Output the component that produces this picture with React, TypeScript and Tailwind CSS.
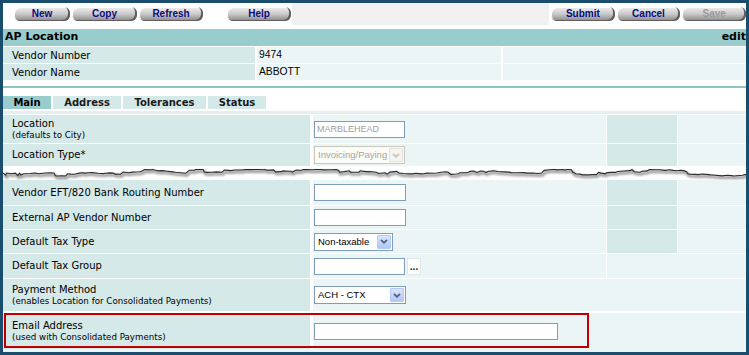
import React from "react";

const LBL = "bg-[#d5e9e9]";
const VAL = "bg-[#ecf5f5]";
const VERD = "font-['DejaVu_Sans',Verdana,sans-serif]";
const ARIAL = "font-['Liberation_Sans',Arial,sans-serif]";

function Btn({ label, w, disabled }: { label: string; w: string; disabled?: boolean }) {
  return (
    <div
      className={`${w} h-[14px] rounded-[6px] bg-gradient-to-b from-[#f0f0f0] via-[#c9c9c9] to-[#888888] shadow-[inset_-2px_-1px_0_#5e5e5e,inset_1px_1px_0_#ffffff] flex items-center justify-center ${ARIAL} font-bold text-[10px] leading-none ${
        disabled ? "text-[#9a9a9a]" : "text-[#0a0a80]"
      }`}
    >
      {label}
    </div>
  );
}

function Chevron({ color }: { color: string }) {
  return (
    <svg width="8" height="5" viewBox="0 0 8 5">
      <path d="M1 0.8 L4 3.8 L7 0.8" fill="none" stroke={color} strokeWidth="1.8" />
    </svg>
  );
}

function Select({ text, w, disabled }: { text: string; w: string; disabled?: boolean }) {
  return (
    <div
      className={`${w} h-[18px] flex items-center border ${
        disabled ? "border-[#c9c7ba] bg-[#fbfbf8]" : "border-[#7f9db9] bg-white"
      }`}
    >
      <span
        className={`flex-1 pl-[3px] ${ARIAL} text-[9.5px] leading-none whitespace-nowrap overflow-hidden ${
          disabled ? "text-[#a8a79d]" : "text-black"
        }`}
      >
        {text}
      </span>
      <div
        className={`w-[14px] h-[14px] mr-[1px] rounded-[1px] flex items-center justify-center border ${
          disabled
            ? "border-[#e2e1da] bg-[#f5f4ef]"
            : "border-[#b5c9f6] bg-gradient-to-b from-[#dbe6fd] to-[#b1c6f5]"
        }`}
      >
        <Chevron color={disabled ? "#c9c7ba" : "#4d6185"} />
      </div>
    </div>
  );
}

function Input({ w, text }: { w: string; text?: string }) {
  return (
    <div className={`${w} h-[17px] border border-[#7f9db9] bg-white flex items-center pl-[2px]`}>
      {text && <span className={`${ARIAL} text-[9px] text-[#a0a0a0] leading-none`}>{text}</span>}
    </div>
  );
}

function Label({ main, sub }: { main: string; sub?: string }) {
  return (
    <div className={`w-[307px] ${LBL} pl-[9px] flex flex-col justify-center ${VERD} text-black`}>
      <div className="text-[10px] leading-[12px]">{main}</div>
      {sub && <div className="text-[8.7px] leading-[11px]">{sub}</div>}
    </div>
  );
}

function tornPath(width: number) {
  let seed = 12345;
  const rnd = () => {
    seed = (seed * 16807) % 2147483647;
    return seed / 2147483647;
  };
  let x = 0;
  let y = 7;
  let d = "M0 7";
  while (x < width) {
    const r = rnd();
    if (r < 0.35) {
      x += 1 + rnd() * 2;
      y = Math.max(3.5, Math.min(10, y + (rnd() - 0.5) * 5));
    } else {
      x += 2 + rnd() * 5;
      y = Math.max(3.5, Math.min(10, y + (rnd() - 0.5) * 1.6));
    }
    d += ` L${x.toFixed(1)} ${y.toFixed(1)}`;
  }
  return d;
}

const TORN = tornPath(744);

export default function App() {
  return (
    <div className="w-[749px] h-[355px] bg-[#1a4c6c] p-[3px] overflow-hidden">
      <div className="w-full h-full bg-white flex flex-col">
        {/* toolbar */}
        <div className="flex h-[22px] bg-[#f0f0f0] shrink-0">
          <div className="w-[289px] bg-white flex items-center pl-[11px] gap-[2px]">
            <Btn label="New" w="w-[56px]" />
            <Btn label="Copy" w="w-[65px]" />
            <Btn label="Refresh" w="w-[64px]" />
            <div className="w-[20px]" />
            <Btn label="Help" w="w-[64px]" />
          </div>
          <div className="flex-1" />
          <div className="w-[197px] bg-white flex items-center pl-[2px] gap-[2px]">
            <Btn label="Submit" w="w-[64px]" />
            <Btn label="Cancel" w="w-[64px]" />
            <Btn label="Save" w="w-[64px]" disabled />
          </div>
        </div>

        {/* header */}
        <div className="mt-[4px] h-[17px] bg-[#99cccc] flex items-center justify-between pl-[2px] shrink-0">
          <span className={`${VERD} font-bold text-[11px] text-black`}>AP Location</span>
          <span className={`${VERD} font-bold text-[11px] text-black`}>edit</span>
        </div>

        {/* vendor info */}
        <div className="mt-[1px] flex flex-col gap-[1px] shrink-0">
          {[
            ["Vendor Number", "9474"],
            ["Vendor Name", "ABBOTT"],
          ].map(([l, v]) => (
            <div key={l} className="flex h-[16px] gap-[2px]">
              <div className={`w-[252px] ${LBL} pl-[9px] flex items-center ${VERD} text-[10px] text-black`}>{l}</div>
              <div className={`w-[244px] ${VAL} pl-[2px] flex items-center ${ARIAL} text-[10.3px] text-black`}>{v}</div>
              <div className={`flex-1 ${VAL}`} />
            </div>
          ))}
        </div>

        <div className="mt-[6px] h-[2px] bg-[#8cc4c4] shrink-0" />

        {/* tabs */}
        <div className="mt-[8px] flex gap-[2px] h-[13px] shrink-0">
          <div className={`w-[48px] bg-[#99cccc] flex items-center justify-center ${VERD} font-bold text-[10px] text-black`}>Main</div>
          <div className={`w-[68px] ${LBL} flex items-center justify-center ${VERD} font-bold text-[10px] text-[#1a1a1a]`}>Address</div>
          <div className={`w-[83px] ${LBL} flex items-center justify-center ${VERD} font-bold text-[10px] text-[#1a1a1a]`}>Tolerances</div>
          <div className={`w-[58px] ${LBL} flex items-center justify-center ${VERD} font-bold text-[10px] text-[#1a1a1a]`}>Status</div>
        </div>

        <div className="mt-[2px] h-[3px] bg-[#e4f0f0] shrink-0" />

        {/* rows above tear */}
        <div className="mt-[1px] flex flex-col gap-[1px] shrink-0">
          <div className="flex h-[28px] gap-[1px]">
            <Label main="Location" sub="(defaults to City)" />
            <div className={`ml-[2px] w-[293px] ${VAL} flex items-center pl-[1px]`}>
              <Input w="w-[91px]" text="MARBLEHEAD" />
            </div>
            <div className={`w-[70px] ${LBL}`} />
            <div className={`flex-1 ${VAL}`} />
          </div>
          <div className="flex h-[22px] gap-[1px]">
            <Label main="Location Type*" />
            <div className={`ml-[2px] w-[293px] ${VAL} flex items-center pl-[1px]`}>
              <Select text="Invoicing/Paying" w="w-[91px]" disabled />
            </div>
            <div className={`w-[70px] ${LBL}`} />
            <div className={`flex-1 ${VAL}`} />
          </div>
        </div>

        {/* torn edge */}
        <div className="h-[14px] shrink-0">
          <svg width="743" height="14" viewBox="0 0 743 14">
            <defs>
              <filter id="blur" x="-5%" y="-50%" width="110%" height="200%">
                <feGaussianBlur stdDeviation="1.1" />
              </filter>
            </defs>
            <path d={TORN} transform="translate(1,2)" fill="none" stroke="#7a7a7a" strokeWidth="2.8" opacity="0.75" filter="url(#blur)" />
            <path d={TORN} fill="none" stroke="#2a2a2a" strokeWidth="1.1" />
          </svg>
        </div>

        {/* rows below tear */}
        <div className="flex flex-col gap-[1px] shrink-0">
          <div className="flex h-[25px] gap-[1px]">
            <Label main="Vendor EFT/820 Bank Routing Number" />
            <div className={`ml-[2px] w-[293px] ${VAL} flex items-center pl-[1px]`}>
              <Input w="w-[92px]" />
            </div>
            <div className={`w-[70px] ${LBL}`} />
            <div className={`flex-1 ${VAL}`} />
          </div>
          <div className="flex h-[23px] gap-[1px]">
            <Label main="External AP Vendor Number" />
            <div className={`ml-[2px] w-[293px] ${VAL} flex items-center pl-[1px]`}>
              <Input w="w-[92px]" />
            </div>
            <div className={`w-[70px] ${LBL}`} />
            <div className={`flex-1 ${VAL}`} />
          </div>
          <div className="flex h-[23px] gap-[1px]">
            <Label main="Default Tax Type" />
            <div className={`ml-[2px] w-[293px] ${VAL} flex items-center pl-[1px]`}>
              <Select text="Non-taxable" w="w-[79px]" />
            </div>
            <div className={`w-[70px] ${LBL}`} />
            <div className={`flex-1 ${VAL}`} />
          </div>
          <div className="flex h-[24px] gap-[1px]">
            <Label main="Default Tax Group" />
            <div className={`ml-[2px] w-[293px] ${VAL} flex items-center pl-[1px] gap-[2px]`}>
              <Input w="w-[91px]" />
              <div className={`w-[14px] h-[17px] border border-[#dfe6e6] bg-white flex items-end justify-center pb-[2px] ${ARIAL} font-bold text-[10px] leading-none text-[#222]`}>
                ...
              </div>
            </div>
            <div className={`flex-1 ${VAL}`} />
          </div>
          <div className="flex h-[32px] gap-[1px]">
            <Label main="Payment Method" sub="(enables Location for Consolidated Payments)" />
            <div className={`ml-[2px] flex-1 ${VAL} flex items-center pl-[1px]`}>
              <Select text="ACH - CTX" w="w-[92px]" />
            </div>
          </div>
          <div className="relative flex h-[36px] gap-[1px] mt-[1px]">
            <Label main="Email Address" sub="(used with Consolidated Payments)" />
            <div className={`ml-[2px] flex-1 ${VAL} flex items-center pl-[1px] pt-[1px]`}>
              <Input w="w-[244px]" />
            </div>
            <div className="absolute left-[1px] top-0 w-[585px] h-[35px] border-2 border-[#c00000]" />
          </div>
        </div>
        <div className={`flex-1 ${VAL}`} />
      </div>
    </div>
  );
}
